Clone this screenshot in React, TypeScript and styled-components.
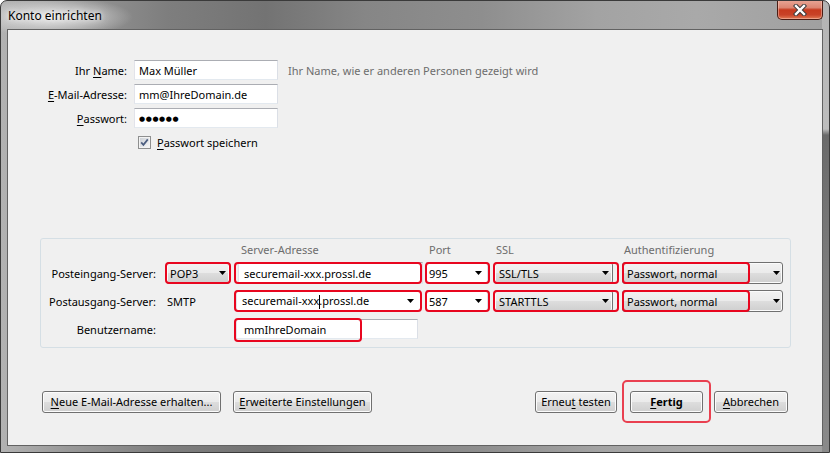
import React from "react";
import styled, { createGlobalStyle } from "styled-components";

const FONT = `"Noto Sans", "Open Sans", "DejaVu Sans", sans-serif`;

const Global = createGlobalStyle`
  html, body { margin: 0; padding: 0; background: #ffffff; }
  body { width: 830px; height: 453px; overflow: hidden; font-family: ${FONT}; }
  * { box-sizing: border-box; }
`;

const Window = styled.div`
  width: 830px;
  height: 453px;
  display: flex;
  flex-direction: column;
  border: 1px solid #3a3a3a;
  border-radius: 7px 7px 0 0;
  overflow: hidden;
  font-family: ${FONT};
  background:
    linear-gradient(to bottom, #b4b4b4 0, #bdbdbd 128px, #6a6a6a 134px, #7c7c7c 60%, #8a8a8a 100%) right top / 7px 100% no-repeat,
    radial-gradient(ellipse 80px 20px at 52px 16px, rgba(236, 236, 236, 0.95), rgba(236, 236, 236, 0) 100%),
    linear-gradient(to right, #b2b2b2 0, #999 8%, #7e7e7e 20%, #737373 32%, #868686 44%, #8e8e8e 58%, #a3a3a3 72%, #a9a9a9 84%, #a0a0a0 100%);
`;

const TitleBar = styled.div`
  height: 28px;
  flex: none;
  display: flex;
  align-items: flex-start;
  padding: 0 6px 0 7px;
`;

const TitleText = styled.div`
  margin-top: 7px;
  font-size: 12px;
  line-height: 16px;
  color: #000;
  text-shadow: 0 0 5px rgba(255, 255, 255, 0.9), 0 0 10px rgba(255, 255, 255, 0.8);
`;

const CloseBtn = styled.div`
  margin-left: auto;
  margin-top: -1px;
  width: 46px;
  height: 20px;
  border: 1px solid #4a1d14;
  border-top: none;
  border-radius: 0 0 5px 5px;
  background: linear-gradient(to bottom, #e9a797 0%, #dc8672 40%, #c63a1e 52%, #c84227 78%, #e07b55 100%);
  box-shadow: inset 0 0 0 1px rgba(255, 210, 200, 0.45);
  display: flex;
  align-items: center;
  justify-content: center;
`;

const Client = styled.div`
  flex: 1;
  margin: 0 6px 6px;
  border: 1px solid #626262;
  background: #f0f0f0;
  display: flex;
  flex-direction: column;
  font-size: 11px;
  color: #000;
`;

const TopForm = styled.div`
  margin-top: 30px;
  display: grid;
  grid-template-columns: 119px 144px auto;
  grid-auto-rows: 20px;
  column-gap: 7px;
  row-gap: 4px;
  align-items: center;
`;

const FormLabel = styled.div`
  justify-self: end;
  white-space: nowrap;
`;

const Hint = styled.div`
  margin-left: 3px;
  color: #6d6d6d;
  white-space: nowrap;
`;

const Key = styled.span`
  text-decoration: underline;
  text-decoration-thickness: 1px;
  text-underline-offset: 2px;
`;

const TextBox = styled.div<{ $w?: number; $pad?: number; $h?: number }>`
  position: relative;
  width: ${(p) => (p.$w ? `${p.$w}px` : "100%")};
  height: ${(p) => p.$h ?? 20}px;
  background: #ffffff;
  border: 1px solid;
  border-color: #abadb3 #dbdfe6 #e3e9ef #e2e3ea;
  display: flex;
  align-items: center;
  padding-left: ${(p) => p.$pad ?? 4}px;
  white-space: nowrap;
`;

const Dots = styled.span`
  font-size: 7px;
  letter-spacing: 0.6px;
`;

const CheckRow = styled.div`
  margin: 7px 0 0 130px;
  height: 14px;
  display: flex;
  align-items: center;
  gap: 6px;
`;

const ServerGroup = styled.div`
  margin: 89px 31px 0 32px;
  border: 1px solid #d5dfe5;
  border-radius: 3px;
  padding: 4px 0 7px;
  display: grid;
  grid-template-columns: 121px 71px 190px 68px 129px 1fr;
  grid-template-rows: 13px 22px 22px 22px;
  row-gap: 6px;
  align-items: center;
`;

const HeadSpacer = styled.div`
  grid-column: 1 / 3;
`;

const Head = styled.div<{ $indent: number }>`
  padding-left: ${(p) => p.$indent}px;
  color: #6d6d6d;
  white-space: nowrap;
  line-height: 13px;
`;

const RowLabel = styled.div`
  justify-self: end;
  padding-right: 6px;
  white-space: nowrap;
`;

const Slot = styled.div<{ $indent: number }>`
  padding-left: ${(p) => p.$indent}px;
  display: flex;
  align-items: center;
  height: 22px;
`;

const Plain = styled.div`
  white-space: nowrap;
`;

const Combo = styled.div<{ $w: number; $pad: number; $arrowPad: number }>`
  position: relative;
  width: ${(p) => p.$w}px;
  height: 22px;
  border: 1px solid #707070;
  border-radius: 3px;
  background: linear-gradient(to bottom, #f2f2f2 0%, #ebebeb 48%, #dddddd 52%, #cfcfcf 100%);
  box-shadow: inset 0 0 0 1px #fbfbfb;
  display: flex;
  align-items: center;
  justify-content: space-between;
  padding: 0 ${(p) => p.$arrowPad}px 0 ${(p) => p.$pad}px;
  white-space: nowrap;
`;

const EditCombo = styled.div<{ $w: number; $pad: number; $arrowPad: number }>`
  position: relative;
  width: ${(p) => p.$w}px;
  height: 22px;
  background: #ffffff;
  border: 1px solid;
  border-color: #abadb3 #dbdfe6 #e3e9ef #e2e3ea;
  display: flex;
  align-items: center;
  justify-content: space-between;
  padding: 0 ${(p) => p.$arrowPad}px 0 ${(p) => p.$pad}px;
  white-space: nowrap;
`;

const Mark = styled.span<{ $l: number; $w: number; $t?: number; $b?: number }>`
  position: absolute;
  left: ${(p) => p.$l}px;
  width: ${(p) => p.$w}px;
  top: ${(p) => p.$t ?? -1}px;
  bottom: ${(p) => p.$b ?? -1}px;
  border: 2px solid #e8061f;
  border-radius: 4px;
  pointer-events: none;
`;

const Caret = styled.span`
  display: inline-block;
  width: 1px;
  height: 14px;
  background: #000;
  vertical-align: middle;
  margin: 0 -1px 0 0;
`;

const ButtonRow = styled.div`
  margin-top: 32px;
  height: 43px;
  padding: 0 34px;
  display: flex;
  align-items: center;
`;

const ButtonGroup = styled.div`
  display: flex;
  align-items: center;
  gap: 12px;
`;

const RightGroup = styled.div`
  margin-left: auto;
  display: flex;
  align-items: center;
`;

const Btn = styled.div<{ $w: number; $bold?: boolean }>`
  width: ${(p) => p.$w}px;
  height: 22px;
  border: 1px solid #707070;
  border-radius: 3px;
  background: linear-gradient(to bottom, #f2f2f2 0%, #ebebeb 48%, #dddddd 52%, #cfcfcf 100%);
  box-shadow: inset 0 0 0 1px #fcfcfc;
  display: flex;
  align-items: center;
  justify-content: center;
  font-weight: ${(p) => (p.$bold ? 700 : 400)};
  white-space: nowrap;
`;

const MarkFrame = styled.div`
  width: 89px;
  height: 43px;
  margin: 0 3px 0 5px;
  border: 2px solid #e94050;
  border-radius: 5px;
  display: flex;
  align-items: center;
  justify-content: center;
`;

const Arrow = () => (
  <svg width="7" height="4" viewBox="0 0 7 4">
    <polygon points="0,0 7,0 3.5,4" fill="#000" />
  </svg>
);

const CheckBoxIcon = () => (
  <svg width="13" height="13" viewBox="0 0 13 13">
    <defs>
      <linearGradient id="cbIn" x1="0" y1="0" x2="1" y2="1">
        <stop offset="0" stopColor="#cdd1d7" />
        <stop offset="1" stopColor="#f6f6f6" />
      </linearGradient>
    </defs>
    <rect x="0.5" y="0.5" width="12" height="12" fill="#f3f3f3" stroke="#8e8f8f" />
    <rect x="2" y="2" width="9" height="9" fill="url(#cbIn)" />
    <path d="M3.2 6.4 L5.4 8.9 L9.8 3.4" stroke="#4c5e80" strokeWidth="1.7" fill="none" />
  </svg>
);

const CloseIcon = () => (
  <svg width="14" height="12" viewBox="0 0 14 12">
    <path d="M3 2 L11 10 M11 2 L3 10" stroke="#3b3b3b" strokeWidth="4.4" strokeLinecap="square" />
    <path d="M3 2 L11 10 M11 2 L3 10" stroke="#ffffff" strokeWidth="2.4" strokeLinecap="square" />
  </svg>
);

export default function App() {
  return (
    <>
      <Global />
      <Window>
        <TitleBar>
          <TitleText>Konto einrichten</TitleText>
          <CloseBtn>
            <CloseIcon />
          </CloseBtn>
        </TitleBar>
        <Client>
          <TopForm>
            <FormLabel>
              Ihr <Key>N</Key>ame:
            </FormLabel>
            <TextBox>Max Müller</TextBox>
            <Hint>Ihr Name, wie er anderen Personen gezeigt wird</Hint>

            <FormLabel>
              <Key>E</Key>-Mail-Adresse:
            </FormLabel>
            <TextBox>mm@IhreDomain.de</TextBox>
            <span />

            <FormLabel>
              <Key>P</Key>asswort:
            </FormLabel>
            <TextBox>
              <Dots>●●●●●●</Dots>
            </TextBox>
            <span />
          </TopForm>
          <CheckRow>
            <CheckBoxIcon />
            <span>
              <Key>P</Key>asswort speichern
            </span>
          </CheckRow>

          <ServerGroup>
            <HeadSpacer />
            <Head $indent={8}>Server-Adresse</Head>
            <Head $indent={6}>Port</Head>
            <Head $indent={5}>SSL</Head>
            <Head $indent={4}>Authentifizierung</Head>

            <RowLabel>Posteingang-Server:</RowLabel>
            <Slot $indent={4}>
              <Combo $w={64} $pad={3} $arrowPad={3}>
                POP3
                <Arrow />
                <Mark $l={-2} $w={66} />
              </Combo>
            </Slot>
            <Slot $indent={5}>
              <TextBox $w={185} $h={22} $pad={5}>
                securemail-xxx.prossl.de
                <Mark $l={-5} $w={188} />
              </TextBox>
            </Slot>
            <Slot $indent={3}>
              <EditCombo $w={62} $pad={2} $arrowPad={5}>
                995
                <Arrow />
                <Mark $l={-2} $w={65} />
              </EditCombo>
            </Slot>
            <Slot $indent={3}>
              <Combo $w={119} $pad={4} $arrowPad={3}>
                SSL/TLS
                <Arrow />
                <Mark $l={-2} $w={126} />
              </Combo>
            </Slot>
            <Slot $indent={2}>
              <Combo $w={161} $pad={4} $arrowPad={2}>
                Passwort, normal
                <Arrow />
                <Mark $l={-1} $w={128} />
              </Combo>
            </Slot>

            <RowLabel>Postausgang-Server:</RowLabel>
            <Slot $indent={5}>
              <Plain>SMTP</Plain>
            </Slot>
            <Slot $indent={3}>
              <EditCombo $w={185} $pad={5} $arrowPad={6}>
                <span>
                  securemail-xxx<Caret />.prossl.de
                </span>
                <Arrow />
                <Mark $l={-3} $w={188} />
              </EditCombo>
            </Slot>
            <Slot $indent={3}>
              <EditCombo $w={62} $pad={2} $arrowPad={5}>
                587
                <Arrow />
                <Mark $l={-2} $w={65} />
              </EditCombo>
            </Slot>
            <Slot $indent={3}>
              <Combo $w={119} $pad={4} $arrowPad={3}>
                STARTTLS
                <Arrow />
                <Mark $l={-2} $w={126} />
              </Combo>
            </Slot>
            <Slot $indent={2}>
              <Combo $w={161} $pad={4} $arrowPad={2}>
                Passwort, normal
                <Arrow />
                <Mark $l={-1} $w={128} />
              </Combo>
            </Slot>

            <RowLabel>Benutzername:</RowLabel>
            <span />
            <Slot $indent={3}>
              <TextBox $w={182} $pad={7}>
                mmIhreDomain
                <Mark $l={-3} $w={128} $t={-2} $b={-4} />
              </TextBox>
            </Slot>
            <span />
            <span />
            <span />
          </ServerGroup>

          <ButtonRow>
            <ButtonGroup>
              <Btn $w={179}>
                <span>
                  <Key>N</Key>eue E-Mail-Adresse erhalten...
                </span>
              </Btn>
              <Btn $w={139}>
                <span>
                  <Key>E</Key>rweiterte Einstellungen
                </span>
              </Btn>
            </ButtonGroup>
            <RightGroup>
              <Btn $w={82}>
                <span>
                  Erneu<Key>t</Key> testen
                </span>
              </Btn>
              <MarkFrame>
                <Btn $w={73} $bold>
                  <span>
                    <Key>F</Key>ertig
                  </span>
                </Btn>
              </MarkFrame>
              <Btn $w={74}>
                <span>
                  <Key>A</Key>bbrechen
                </span>
              </Btn>
            </RightGroup>
          </ButtonRow>
        </Client>
      </Window>
    </>
  );
}
